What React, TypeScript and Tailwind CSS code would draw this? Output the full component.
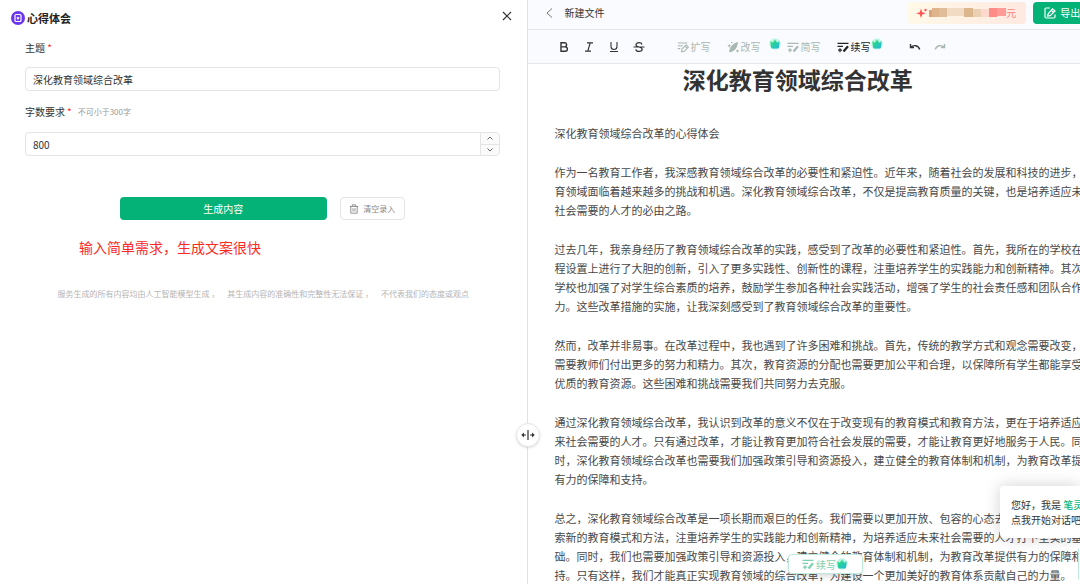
import React from "react";

const paragraphs = [
  "深化教育领域综合改革的心得体会",
  "作为一名教育工作者，我深感教育领域综合改革的必要性和紧迫性。近年来，随着社会的发展和科技的进步，教育领域面临着越来越多的挑战和机遇。深化教育领域综合改革，不仅是提高教育质量的关键，也是培养适应未来社会需要的人才的必由之路。",
  "过去几年，我亲身经历了教育领域综合改革的实践，感受到了改革的必要性和紧迫性。首先，我所在的学校在课程设置上进行了大胆的创新，引入了更多实践性、创新性的课程，注重培养学生的实践能力和创新精神。其次，学校也加强了对学生综合素质的培养，鼓励学生参加各种社会实践活动，增强了学生的社会责任感和团队合作能力。这些改革措施的实施，让我深刻感受到了教育领域综合改革的重要性。",
  "然而，改革并非易事。在改革过程中，我也遇到了许多困难和挑战。首先，传统的教学方式和观念需要改变，这需要教师们付出更多的努力和精力。其次，教育资源的分配也需要更加公平和合理，以保障所有学生都能享受到优质的教育资源。这些困难和挑战需要我们共同努力去克服。",
  "通过深化教育领域综合改革，我认识到改革的意义不仅在于改变现有的教育模式和教育方法，更在于培养适应未来社会需要的人才。只有通过改革，才能让教育更加符合社会发展的需要，才能让教育更好地服务于人民。同时，深化教育领域综合改革也需要我们加强政策引导和资源投入，建立健全的教育体制和机制，为教育改革提供有力的保障和支持。",
  "总之，深化教育领域综合改革是一项长期而艰巨的任务。我们需要以更加开放、包容的心态去推动改革，不断探索新的教育模式和方法，注重培养学生的实践能力和创新精神，为培养适应未来社会需要的人才打下坚实的基础。同时，我们也需要加强政策引导和资源投入，建立健全的教育体制和机制，为教育改革提供有力的保障和支持。只有这样，我们才能真正实现教育领域的综合改革，为建设一个更加美好的教育体系贡献自己的力量。",
];

const disclaimer = [
  "服务生成的所有内容均由人工智能模型生成 ，",
  "其生成内容的准确性和完整性无法保证 ，",
  "不代表我们的态度或观点",
];

type IconProps = { className?: string };

function CrownIcon({ className = "" }: IconProps) {
  return (
    <svg viewBox="0 0 12 12" className={`h-3 w-3 shrink-0 ${className}`} aria-hidden="true">
      <defs>
        <linearGradient id="crown" x1="0" y1="0" x2="1" y2="1">
          <stop offset="0" stopColor="#2fe36a" />
          <stop offset="1" stopColor="#22b5e0" />
        </linearGradient>
      </defs>
      <circle cx="6" cy="6" r="5.7" fill="#bdf5e3" />
      <path d="M1.300 3.300 3.700 4.800 6 1.800l2.300 3 2.400-1.500-.8 6.200a1 1 0 0 1-1 .9H3.100a1 1 0 0 1-1-.9z" fill="url(#crown)" />
    </svg>
  );
}

function LinesPenIcon({ className = "" }: IconProps) {
  return (
    <svg viewBox="0 0 12 12" className={`h-3 w-3 shrink-0 ${className}`} fill="none" stroke="currentColor" strokeWidth="1.200" aria-hidden="true">
      <path d="M.5 2.300h11M.5 5.300h5.500M3 7.200v4M1 9.200h4" />
      <path d="m6.500 10.500 4.500-5.200" strokeWidth="2.200" />
    </svg>
  );
}

function ExpandIcon() {
  return (
    <svg viewBox="0 0 12 12" className="h-3 w-3 shrink-0" fill="none" stroke="currentColor" strokeWidth="1.100" aria-hidden="true">
      <path d="M.8 2h9.400M.8 4.800h5M.8 7.600h2.500" />
      <path d="m4.500 10.800.4-2.600 4.300-4.300 2.200 2.200-4.300 4.300zM8 5.200l2 2" strokeLinejoin="round" />
    </svg>
  );
}

function WandIcon() {
  return (
    <svg viewBox="0 0 12 12" className="h-3 w-3 shrink-0" fill="currentColor" aria-hidden="true">
      <path d="M11 1C6 2.300 2.900 5.500 2 10.800l1.500.4C8.300 9.800 10.600 6 11 1z" />
      <path d="M2.300 2.700 2.900 4.200l1.500.6-1.500.6-.6 1.500-.6-1.500-1.500-.6 1.500-.6z" />
      <circle cx="10.500" cy="10" r="1.200" />
      <circle cx="4.800" cy="1.500" r=".8" />
    </svg>
  );
}

function SidePanel() {
  return (
    <aside className="flex min-w-0 flex-[527] flex-col bg-white">
      <header className="flex items-center justify-between pt-2 pr-[15px] pl-[11px]">
        <h2 className="flex items-center gap-0.5 text-[11px] leading-5 font-bold text-[#222]">
          <svg viewBox="0 0 14 14" className="h-3.5 w-3.5" aria-hidden="true">
            <circle cx="7" cy="7" r="7" fill="#6b35ee" />
            <rect x="4" y="3.500" width="6" height="7" rx="1" fill="none" stroke="#fff" strokeWidth="1.200" />
            <path d="m7 5.200.6 1.200 1.200.2-.9.8.2 1.300L7 8.100l-1.100.6.2-1.300-.9-.8 1.200-.2z" fill="#fff" />
          </svg>
          心得体会
        </h2>
        <button type="button" aria-label="关闭" className="mb-1">
          <svg viewBox="0 0 10 10" className="h-2.5 w-2.5" stroke="#333" strokeWidth="1.200" aria-hidden="true">
            <path d="m1 1 8 8M9 1 1 9" />
          </svg>
        </button>
      </header>

      <form className="flex flex-col pt-3 pr-[27px] pl-[25px] text-[10px] text-[#333]">
        <label htmlFor="topic" className="leading-4">
          主题 <span className="text-red-500">*</span>
        </label>
        <input
          id="topic"
          defaultValue="深化教育领域综合改革"
          className="mt-[11px] h-6 w-full rounded border border-[#e4e4e7] px-[7px] outline-none"
        />

        <label htmlFor="count" className="mt-[13px] flex items-center gap-0.5 leading-4">
          字数要求 <span className="text-red-500">*</span>
          <span className="pl-1 text-[8px] text-[#999]">不可小于300字</span>
        </label>
        <div className="mt-3 flex h-6 overflow-hidden rounded border border-[#e4e4e7]">
          <input id="count" defaultValue="800" inputMode="numeric" className="min-w-0 flex-1 px-[7px] outline-none" />
          <div className="flex w-[19px] flex-col border-l border-[#e4e4e7] bg-[#fafafa]">
            <button type="button" aria-label="增加" className="flex flex-1 items-center justify-center border-b border-[#e4e4e7]">
              <svg viewBox="0 0 6 4" className="h-1 w-1.5" fill="none" stroke="#666" aria-hidden="true">
                <path d="m.5 3.500 2.500-2.500 2.500 2.500" />
              </svg>
            </button>
            <button type="button" aria-label="减少" className="flex flex-1 items-center justify-center">
              <svg viewBox="0 0 6 4" className="h-1 w-1.5" fill="none" stroke="#666" aria-hidden="true">
                <path d="m.5.5 2.500 2.500 2.500-2.500" />
              </svg>
            </button>
          </div>
        </div>

        <div className="mt-[41px] flex justify-center gap-[13px]">
          <button type="button" className="h-[23px] w-[207px] rounded bg-[#04b277] text-white">
            生成内容
          </button>
          <button
            type="button"
            className="flex h-[23px] w-[65px] items-center justify-center gap-1 rounded border border-[#e4e4e7] text-[8px] text-[#888]"
          >
            <svg viewBox="0 0 10 10" className="h-2.5 w-2.5" fill="none" stroke="currentColor" strokeWidth=".9" aria-hidden="true">
              <path d="M.8 2.500h8.400M3.300 2.500V.8h3.400v1.700M1.800 2.500v6.700h6.400V2.500M4 4.200v3.300M6 4.200v3.300" />
            </svg>
            清空录入
          </button>
        </div>
      </form>

      <p className="mt-[17px] pl-[79px] text-[14px] leading-5 text-[#fb2a1d]">输入简单需求，生成文案很快</p>

      <p className="mt-[31px] flex justify-center gap-2 text-[8px] leading-3 text-[#b5b5b5]">
        {disclaimer.map((part) => (
          <span key={part}>{part}</span>
        ))}
      </p>
    </aside>
  );
}

function TopBar() {
  return (
    <header className="flex h-[30px] items-center justify-between overflow-hidden border-b border-[#e5e7eb] bg-[#fafbfe] pl-[18px]">
      <button type="button" className="mb-1 flex items-center gap-3 text-[10px] text-[#333]">
        <svg viewBox="0 0 7 10" className="h-2.5 w-[7px]" fill="none" stroke="#777" aria-hidden="true">
          <path d="M6 .5 1 5l5 4.500" />
        </svg>
        新建文件
      </button>
      <div className="-mr-9 mb-1 flex items-center gap-[7px]">
        <div className="flex h-[22px] w-[118px] items-center rounded bg-linear-to-r from-[#fff9e8] to-[#ffe9e1] pl-2">
          <svg viewBox="0 0 12 12" className="h-3 w-3 shrink-0" fill="#ff5454" aria-hidden="true">
            <path d="M5 1.500 6.200 5.200 10 6.300 6.200 7.400 5 11 3.800 7.400 0 6.300l3.800-1.100z" />
            <circle cx="9.500" cy="3" r="1.200" />
          </svg>
          {/* price text is masked by a mosaic */}
          <svg viewBox="0 0 80 10" className="h-2.5 w-20 shrink-0" aria-hidden="true">
            <rect x="1" y="2" width="3" height="7" fill="#dba37c" />
            <rect x="4" width="7" height="9" fill="#e0b48b" />
            <rect x="11" width="8" height="9" fill="#dfbd98" />
            <rect x="19" width="17" height="8" fill="#f1dcc3" />
            <rect x="36" width="9" height="9" fill="#dcb68d" />
            <rect x="45" y="1" width="8" height="8" fill="#ecd0b4" />
            <rect x="53" y="1" width="8" height="8" fill="#ffd8cd" />
            <rect x="61" width="8" height="9" fill="#ff8b87" />
            <rect x="69" width="9" height="8" fill="#ff9c98" />
          </svg>
          <span className="-ml-0.5 text-[10px] text-[#ff8580]">元</span>
        </div>
        <button type="button" className="flex h-[22px] items-center gap-1 rounded bg-[#04b277] px-[11px] text-[10px] whitespace-nowrap text-white">
          <svg viewBox="0 0 12 12" className="h-3 w-3" fill="none" stroke="currentColor" strokeWidth="1.200" aria-hidden="true">
            <path d="M6 1H2.200A1.200 1.200 0 0 0 1 2.200v7.600A1.200 1.200 0 0 0 2.200 11h7.600a1.200 1.200 0 0 0 1.200-1.200V7.500M3.500 9l.5-2L8.500 1.800 11 4 6.300 8.700zM7.500 3.500 9.300 5.300" />
          </svg>
          导出Word
        </button>
      </div>
    </header>
  );
}

function Toolbar() {
  return (
    <div className="flex h-[34px] items-center border-b border-[#e5e7eb] bg-[#fafbfe] pl-[30px] text-[10px] text-[#a9b8b0]">
      <div className="flex items-center gap-[13px] text-[#333]">
        <button type="button" aria-label="加粗">
          <svg viewBox="0 0 12 12" className="h-3 w-3" fill="none" stroke="currentColor" strokeWidth="1.400" aria-hidden="true">
            <path d="M3 1.700h3.500a2 2 0 0 1 0 4.200H3zM3 5.900h4.200a2.200 2.200 0 0 1 0 4.400H3z" />
          </svg>
        </button>
        <button type="button" aria-label="斜体">
          <svg viewBox="0 0 12 12" className="h-3 w-3" fill="none" stroke="currentColor" strokeWidth="1.200" aria-hidden="true">
            <path d="M4 1.800h6M2 10.200h6M7.200 1.800l-2.400 8.400" />
          </svg>
        </button>
        <button type="button" aria-label="下划线">
          <svg viewBox="0 0 12 12" className="h-3 w-3" fill="none" stroke="currentColor" strokeWidth="1.100" aria-hidden="true">
            <path d="M3 1v4.500a3 3 0 0 0 6 0V1M2 10.500h8" />
          </svg>
        </button>
        <button type="button" aria-label="删除线">
          <svg viewBox="0 0 12 12" className="h-3 w-3" fill="none" stroke="currentColor" strokeWidth="1.200" aria-hidden="true">
            <path d="M9 3.500C8.700 2.200 7.500 1.600 6 1.600c-1.700 0-3 .8-3 2.100C3 5.300 4.500 5.700 6 6s3.200.8 3.200 2.300c0 1.300-1.400 2.100-3.200 2.100-1.600 0-2.900-.7-3.200-2.100M.5 6h11" />
          </svg>
        </button>
      </div>

      <button type="button" className="ml-8 flex items-center gap-0.5">
        <ExpandIcon />
        扩写
      </button>
      <button type="button" className="ml-4 flex items-center gap-0.5">
        <WandIcon />
        改写
      </button>
      <CrownIcon className="mb-1.5 ml-2" />
      <button type="button" className="ml-1.5 flex items-center gap-0.5">
        <LinesPenIcon />
        简写
      </button>
      <button type="button" className="ml-4 flex items-center gap-0.5 text-[#222]">
        <LinesPenIcon />
        续写
      </button>
      <CrownIcon className="mb-1.5" />

      <button type="button" aria-label="撤销" className="ml-[26px] text-[#333]">
        <svg viewBox="0 0 12 12" className="h-3 w-3" fill="none" stroke="currentColor" strokeWidth="1.400" aria-hidden="true">
          <path d="M1.500 3v3.500h3.500M1.700 6.300C4.500 3.700 9.500 4 10.700 8.500" />
        </svg>
      </button>
      <button type="button" aria-label="重做" className="ml-[13px]">
        <svg viewBox="0 0 12 12" className="h-3 w-3" fill="none" stroke="currentColor" strokeWidth="1.400" aria-hidden="true">
          <path d="M10.500 3v3.500H7M10.300 6.300C7.500 3.700 2.500 4 1.300 8.500" />
        </svg>
      </button>
    </div>
  );
}

export default function App() {
  return (
    <div className="relative flex h-screen overflow-hidden bg-white font-['Noto_Sans_CJK_SC',sans-serif]">
      <SidePanel />

      <main className="relative flex min-w-0 flex-[553] flex-col border-l border-[#e0e1e4]">
        <TopBar />
        <Toolbar />
        <article className="min-h-0 flex-1 overflow-hidden pl-[27px] text-[#484848]">
          <h1 className="pr-[39px] text-center text-[23px] leading-[30px] font-bold text-[#333]">深化教育领域综合改革</h1>
          <div className="mt-[30px] flex w-[540px] flex-col gap-5 text-[11px] leading-[19px]">
            {paragraphs.map((text) => (
              <p key={text}>{text}</p>
            ))}
          </div>
        </article>

        {/* drag handle on the divider */}
        <button
          type="button"
          aria-label="调整宽度"
          className="absolute top-[423px] -left-3 flex h-6 w-6 items-center justify-center rounded-full border border-[#e5e7eb] bg-white shadow"
        >
          <svg viewBox="0 0 14 10" className="h-2.5 w-3.5 shrink-0" fill="none" stroke="#333" strokeWidth="1.200" aria-hidden="true">
            <path d="M7 0v10M5 5H1.500M9 5h3.500" />
            <path d="M3 2.500.3 5 3 7.500zM11 2.500 13.700 5 11 7.500z" fill="#333" stroke="none" />
          </svg>
        </button>

        <button
          type="button"
          className="absolute bottom-2.5 left-[260px] flex h-5 w-[75px] items-center justify-center rounded-sm border border-[#bfe9da] bg-white text-[10px] text-[#7fd0b1] shadow-md"
        >
          <LinesPenIcon className="mr-0.5" />
          续写
          <CrownIcon />
        </button>

        <aside className="absolute right-0 bottom-[46px] w-20 overflow-hidden rounded-l bg-white py-[11px] pl-[11px] text-[10px] leading-[15px] whitespace-nowrap text-[#333] shadow-[0_0_16px_rgba(0,0,0,0.18)]">
          <p>
            您好，我是 <a href="#chat" className="font-medium text-[#10b981]">笔灵</a>
          </p>
          <p>点我开始对话吧</p>
        </aside>
        <button
          type="button"
          aria-label="打开对话"
          className="absolute right-0 bottom-1 h-8 w-0.5 rounded-l border-l border-[#bfe9da] bg-white"
        />
      </main>
    </div>
  );
}
